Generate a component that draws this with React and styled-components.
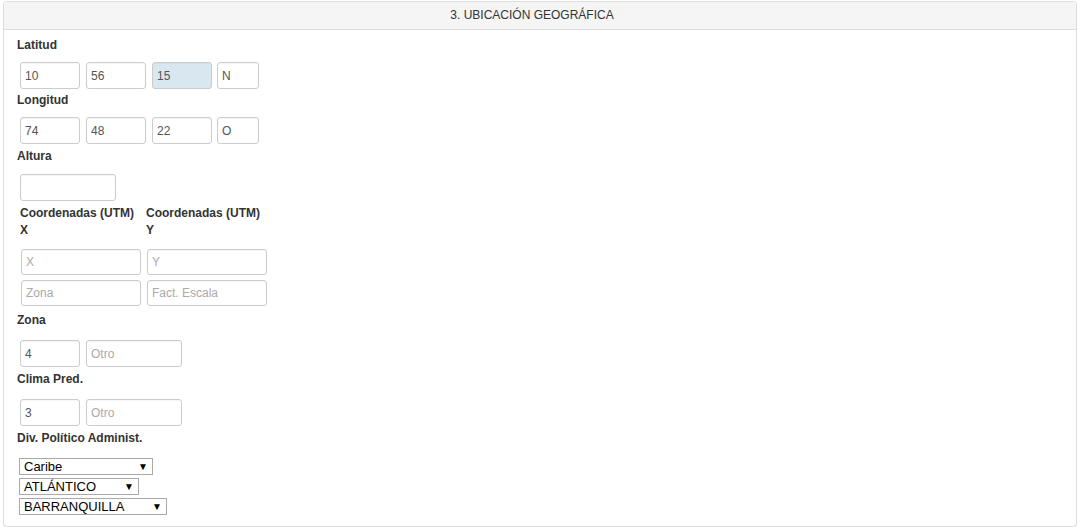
import React from "react";
import styled, { createGlobalStyle } from "styled-components";

const GlobalStyle = createGlobalStyle`
  body {
    margin: 0;
    background: #ffffff;
    font-family: "Liberation Sans", Arial, sans-serif;
    color: #333333;
  }
`;

const Page = styled.div`
  padding: 1px 3px 0 3px;
`;

const Panel = styled.section`
  border: 1px solid #dddddd;
  border-radius: 4px;
  background: #ffffff;
  box-shadow: 0 1px 1px rgba(0, 0, 0, 0.05);
`;

const PanelHeader = styled.div`
  height: 27px;
  line-height: 27px;
  background: #f5f5f5;
  border-bottom: 1px solid #dddddd;
  border-radius: 3px 3px 0 0;
  text-align: center;
  font-size: 12px;
  color: #333333;
  padding-right: 16px;
`;

const PanelBody = styled.div`
  padding: 7px 13px 11px 13px;
`;

const Label = styled.label`
  display: block;
  font-size: 12px;
  line-height: 17px;
  font-weight: bold;
  color: #333333;
  margin-top: ${(p) => p.$mt || 0}px;
`;

const Row = styled.div`
  display: flex;
  gap: 6px;
  padding-left: 3px;
  margin-top: ${(p) => p.$mt || 8}px;
`;

const Input = styled.input`
  box-sizing: border-box;
  width: ${(p) => p.$w || 60}px;
  height: ${(p) => p.$h || 27}px;
  margin-left: ${(p) => p.$ml || 0}px;
  padding: 0 4px;
  border: 1px solid #cccccc;
  border-radius: 3px;
  background: ${(p) => (p.$active ? "#d9e8f0" : "#ffffff")};
  box-shadow: inset 0 1px 1px rgba(0, 0, 0, 0.04);
  font-family: "Liberation Sans", Arial, sans-serif;
  font-size: 12px;
  color: #555555;
  outline: none;
  &::placeholder {
    color: #aaaaaa;
  }
`;

const UtmGrid = styled.div`
  display: grid;
  grid-template-columns: 120px 120px;
  column-gap: 6px;
  padding-left: 3px;
  margin-top: ${(p) => p.$mt || 0}px;
`;

const UtmInputs = styled.div`
  display: grid;
  grid-template-columns: 120px 120px;
  gap: 5px 6px;
  padding-left: 4px;
  margin-top: 10px;
`;

const SelectStack = styled.div`
  display: flex;
  flex-direction: column;
  align-items: flex-start;
  gap: 3px;
  padding-left: 2px;
  margin-top: 11px;
`;

const SelectBox = styled.div`
  box-sizing: border-box;
  display: flex;
  align-items: center;
  width: ${(p) => p.$w}px;
  height: 17px;
  border: 1px solid #a9a9a9;
  background: #ffffff;
`;

const Select = styled.select`
  appearance: none;
  flex: 1;
  min-width: 0;
  height: 100%;
  border: none;
  background: transparent;
  padding: 0 0 0 4px;
  font-family: "Liberation Sans", Arial, sans-serif;
  font-size: 13px;
  color: #000000;
  outline: none;
`;

const Arrow = styled.span`
  width: 18px;
  text-align: center;
  font-size: 10px;
  color: #000000;
  line-height: 15px;
`;

const Dropdown = ({ w, value }) => (
  <SelectBox $w={w}>
    <Select defaultValue={value}>
      <option>{value}</option>
    </Select>
    <Arrow>▼</Arrow>
  </SelectBox>
);

const App = () => {
  return (
    <Page>
      <GlobalStyle />
      <Panel>
        <PanelHeader>3. UBICACIÓN GEOGRÁFICA</PanelHeader>
        <PanelBody>
          <Label>Latitud</Label>
          <Row>
            <Input defaultValue="10" />
            <Input defaultValue="56" />
            <Input defaultValue="15" $active />
            <Input defaultValue="N" $w={42} $ml={-1} />
          </Row>

          <Label $mt={3}>Longitud</Label>
          <Row>
            <Input defaultValue="74" />
            <Input defaultValue="48" />
            <Input defaultValue="22" />
            <Input defaultValue="O" $w={42} $ml={-1} />
          </Row>

          <Label $mt={4}>Altura</Label>
          <Row $mt={9}>
            <Input $w={96} />
          </Row>

          <UtmGrid $mt={4}>
            <Label>Coordenadas (UTM) X</Label>
            <Label>Coordenadas (UTM) Y</Label>
          </UtmGrid>
          <UtmInputs>
            <Input $w={120} $h={26} placeholder="X" />
            <Input $w={120} $h={26} placeholder="Y" />
            <Input $w={120} $h={26} placeholder="Zona" />
            <Input $w={120} $h={26} placeholder="Fact. Escala" />
          </UtmInputs>

          <Label $mt={6}>Zona</Label>
          <Row $mt={11}>
            <Input defaultValue="4" />
            <Input $w={96} placeholder="Otro" />
          </Row>

          <Label $mt={4}>Clima Pred.</Label>
          <Row $mt={11}>
            <Input defaultValue="3" />
            <Input $w={96} placeholder="Otro" />
          </Row>

          <Label $mt={4}>Div. Político Administ.</Label>
          <SelectStack>
            <Dropdown w={134} value="Caribe" />
            <Dropdown w={120} value="ATLÁNTICO" />
            <Dropdown w={148} value="BARRANQUILLA" />
          </SelectStack>
        </PanelBody>
      </Panel>
    </Page>
  );
};

export default App;
